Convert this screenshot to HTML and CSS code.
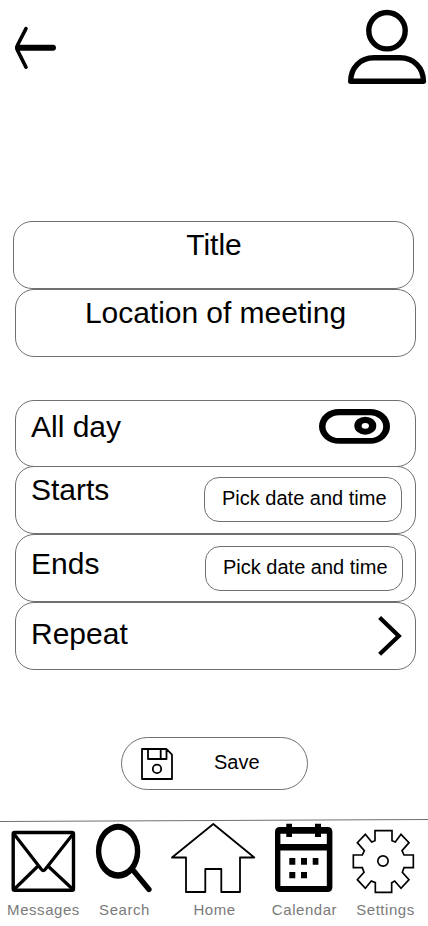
FILE: index.html
```
<!DOCTYPE html>
<html lang="en">
<head>
<meta charset="utf-8">
<meta name="viewport" content="width=device-width, initial-scale=1">
<title>New meeting</title>
<link rel="stylesheet" href="styles.css">
</head>
<body>
<div class="screen">
  <header class="topbar">
    <svg class="back" viewBox="0 0 70 90" fill="none" stroke="#000" stroke-linecap="round" stroke-linejoin="round">
      <path d="M26 28.600L17.800 44.500Q16.200 47.700 17.800 50.900L26 67.200" stroke-width="3.600"/>
      <path d="M18 47.700H53" stroke-width="5.900"/>
    </svg>
    <svg class="profile" viewBox="338 0 90 90" fill="none" stroke="#000" stroke-width="5.400" stroke-linejoin="round">
      <circle cx="387" cy="30.700" r="18.200"/>
      <path d="M350.700 81.200C350.700 68 360 57.800 374 57.800H400C414 57.800 423.400 68 423.400 81.200Z"/>
    </svg>
  </header>

  <main class="form">
    <section class="details">
      <div class="field title">Title</div>
      <div class="field location">Location of meeting</div>
    </section>

    <section class="schedule">
      <div class="row all-day">
        <span>All day</span>
        <svg class="toggle" viewBox="319 409 71 35">
          <path fill-rule="evenodd" d="M339 409H370A20 17.400 0 0 1 370 443.800H339A20 17.400 0 0 1 339 409ZM339 415.200A13.500 11.400 0 0 0 339 438H370A13.200 11.400 0 0 0 370 415.200Z"/>
          <ellipse cx="365.300" cy="425.700" rx="11" ry="9"/>
          <ellipse cx="365.300" cy="425.800" rx="3.700" ry="2.900" fill="#fff"/>
        </svg>
      </div>
      <div class="row starts"><span>Starts</span><div class="picker">Pick date and time</div></div>
      <div class="row ends"><span>Ends</span><div class="picker">Pick date and time</div></div>
      <div class="row repeat">
        <span>Repeat</span>
        <svg class="chevron" viewBox="376 614 28 44" fill="none" stroke="#000" stroke-width="4.200">
          <path d="M379.600 617.500L398.800 635.900L379.600 654.300"/>
        </svg>
      </div>
    </section>

    <div class="save">
      <svg class="disk" viewBox="140 747 34 34" fill="none" stroke="#000" stroke-width="1.800" stroke-linejoin="round">
        <path d="M142 749H166.500L172 754.700V779H142ZM148 749V759H166.500V749M160.700 749V759"/>
        <circle cx="157" cy="768.900" r="4.200"/>
      </svg>
      <span>Save</span>
    </div>
  </main>

  <nav class="tabs">
    <svg class="rule" viewBox="0 818 428 5"><path d="M0 821.500L428 819.500" stroke="#707070" fill="none"/></svg>
    <div class="tab-list">
      <div class="tab wide">
        <svg viewBox="0 823 86 78" fill="none" stroke="#000" stroke-linejoin="round" stroke-linecap="round">
          <rect x="13.200" y="832.500" width="60.300" height="57.700" rx="1.500" stroke-width="3.400"/>
          <path d="M14 834L41.300 869.300Q43.300 871.800 45.300 869.300L73 834M14.500 889L37 867M72.500 889L49 867" stroke-width="3.200"/>
        </svg>
        <span>Messages</span>
      </div>
      <div class="tab">
        <svg viewBox="86 823 76 78">
          <path fill-rule="evenodd" d="M95.900 851.300A22.200 27.500 0 1 1 140.300 851.300A22.200 27.500 0 1 1 95.900 851.300ZM101.300 851A16.800 21.200 0 1 0 134.900 851A16.800 21.200 0 1 0 101.300 851Z"/>
          <path d="M132.500 869.500L149 889.500" stroke="#000" stroke-width="5.300" stroke-linecap="round"/>
        </svg>
        <span>Search</span>
      </div>
      <div class="tab home">
        <svg viewBox="162 823 104 78" fill="none" stroke="#000" stroke-width="1.800" stroke-linejoin="round">
          <path d="M213.300 824L254.300 857.500H240V892H221.300V869H205.300V892H186V857.500H172Z"/>
        </svg>
        <span>Home</span>
      </div>
      <div class="tab">
        <svg viewBox="266 823 76 78">
          <path fill-rule="evenodd" d="M280 827H327.500Q332.400 827 332.400 832V887Q332.400 892 327.500 892H280Q275 892 275 887V832Q275 827 280 827ZM280.400 833.700V844H326.800V833.700ZM280.400 850.500V886H326.800V850.500Z"/>
          <path d="M286.300 823.700h5.700v13.300h-5.700zM315 823.700h6v13.300h-6zM289.300 858h6v6.700h-6zM301 858h6v6.700h-6zM312.700 858h5.700v6.700h-5.700zM289.300 872h6v6.300h-6zM301 872h6v6.300h-6z"/>
        </svg>
        <span>Calendar</span>
      </div>
      <div class="tab wide">
        <svg viewBox="342 823 86 78" fill="none" stroke="#000">
          <g transform="translate(260 810) scale(.33333)" stroke-width="5">
            <path d="M345 62H396V92L406 96L423 73L447 98L426 122L432 135H460V173H432L427 187L447 209L423 235L404 213L395 218V247H346V218L334 213L316 235L292 209L312 187L307 173H280V135H307L313 122L292 98L316 73L335 96L345 92Z"/>
            <circle cx="369" cy="153" r="15.500"/>
          </g>
        </svg>
        <span>Settings</span>
      </div>
    </div>
  </nav>
</div>
</body>
</html>
```
FILE: styles.css
```
* {
  box-sizing: border-box;
}

body {
  margin: 0;
  background: #fff;
  color: #000;
  font-family: "Liberation Sans", Arial, sans-serif;
}

svg {
  display: block;
  flex: none;
}

.screen {
  display: flex;
  flex-direction: column;
  width: 428px;
  height: 926px;
  overflow: hidden;
}

.topbar {
  display: flex;
  justify-content: space-between;
  height: 221px;
}

.back {
  width: 70px;
  height: 90px;
}

.profile {
  width: 90px;
  height: 90px;
}

.form {
  display: flex;
  flex-direction: column;
  height: 597px;
}

.field,
.row {
  width: 401px;
  height: 68px;
  border: 1px solid #707070;
  border-radius: 19px;
  font-size: 30px;
  line-height: 34px;
}

.field {
  padding-top: 6px;
  text-align: center;
}

.title {
  margin-left: 13px;
  padding-left: 1px;
}

.location {
  margin-left: 15px;
  letter-spacing: -0.04px;
}

.schedule {
  margin: 43px 0 0 15px;
}

.row {
  display: flex;
  align-items: flex-start;
  justify-content: space-between;
  padding-left: 15px;
}

.all-day {
  height: 67px;
  padding-top: 9px;
}

.toggle {
  width: 71px;
  height: 35px;
  margin: -1px 25px 0 0;
}

.starts {
  margin-top: -1px;
  padding-top: 6px;
}

.starts .picker {
  margin: 4px 13px 0 0;
}

.ends {
  padding-top: 12px;
}

.ends .picker {
  margin: -1px 12px 0 0;
}

.repeat {
  padding-top: 14px;
}

.chevron {
  width: 28px;
  height: 44px;
  margin: -3px 11px 0 0;
}

.picker {
  width: 198px;
  height: 45px;
  padding: 9px 0 0 17px;
  border: 1px solid #707070;
  border-radius: 15px;
  font-size: 20px;
  line-height: 23px;
  white-space: nowrap;
}

.save {
  display: flex;
  align-items: flex-start;
  gap: 40px;
  width: 187px;
  height: 53px;
  margin: 67px 0 0 121px;
  padding: 9px 0 0 18px;
  border: 1px solid #707070;
  border-radius: 27px;
  font-size: 20px;
  line-height: 23px;
}

.save span {
  margin-top: 4px;
}

.disk {
  width: 34px;
  height: 34px;
}

.rule {
  width: 428px;
  height: 5px;
}

.tab-list {
  display: flex;
}

.tab {
  display: flex;
  flex-direction: column;
  align-items: center;
  width: 76px;
  color: #7a7a7a;
  font-size: 15px;
  line-height: 17px;
  letter-spacing: 0.55px;
}

.tab svg {
  width: 100%;
  height: 78px;
}

.wide {
  width: 86px;
}

.home {
  width: 104px;
}

.tab span {
  margin-left: 1px;
}
```
